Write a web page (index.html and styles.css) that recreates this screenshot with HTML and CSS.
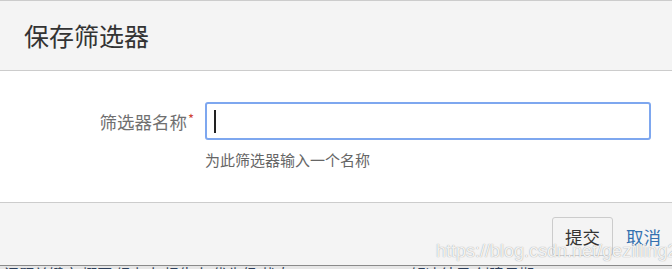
FILE: index.html
```html
<!DOCTYPE html>
<html lang="zh-CN">
<head>
    <meta charset="UTF-8">
    <meta name="viewport" content="width=device-width, initial-scale=1.0">
    <title>保存筛选器</title>
    <link rel="stylesheet" href="styles.css">
</head>
<body>
    <div class="dialog">
        <header class="dialog-header">
            <h2>保存筛选器</h2>
        </header>
        <div class="dialog-body">
            <div class="form-row">
                <label class="field-label" for="filter-name">筛选器名称<span class="required">*</span></label>
                <div class="field">
                    <div class="text-field" id="filter-name"><span class="caret"></span></div>
                    <div class="description">为此筛选器输入一个名称</div>
                </div>
            </div>
        </div>
        <footer class="dialog-footer">
            <button class="button" type="button">提交</button>
            <a class="cancel" href="#">取消</a>
            <span class="watermark">https://blog.csdn.net/gezilling211</span>
        </footer>
    </div>
    <div class="backdrop">
        <span>问题关键字 概要 经办人 报告人 优先级 状态</span>
        <span>解决结果 创建日期</span>
    </div>
</body>
</html>
```

FILE: styles.css
```css
body {
    margin: 0;
    padding: 0;
    font-family: "Noto Sans CJK SC", sans-serif;
    color: #333;
    background-color: #fff;
    overflow: hidden;
}
.dialog {
    border-top: 1px solid #ccc;
    position: relative;
}
.dialog-header {
    background-color: #f4f4f4;
    border-bottom: 1px solid #ccc;
    height: 69px;
    display: flex;
    align-items: center;
    padding: 0 24px;
}
.dialog-header h2 {
    margin: 0;
    font-size: 25px;
    font-weight: normal;
    color: #333;
    line-height: 1;
}
.dialog-body {
    height: 131px;
    padding: 31px 21px 0 0;
    box-sizing: border-box;
}
.form-row {
    display: grid;
    grid-template-columns: 194px 1fr;
    column-gap: 11px;
}
.field-label {
    height: 38px;
    display: flex;
    align-items: center;
    justify-content: flex-end;
    font-size: 17.5px;
    color: #707070;
}
.required {
    color: #d04437;
    font-size: 13px;
    align-self: flex-start;
    margin-top: 7px;
    margin-left: 1px;
}
.text-field {
    height: 38px;
    box-sizing: border-box;
    border: 2px solid #7ea7ef;
    border-radius: 3px;
    display: flex;
    align-items: center;
    padding-left: 7px;
}
.caret {
    width: 2px;
    height: 23px;
    background-color: #222;
}
.description {
    margin-top: 11px;
    font-size: 15px;
    line-height: 18px;
    color: #666;
}
.dialog-footer {
    background-color: #f4f4f4;
    border-top: 1px solid #ccc;
    height: 63px;
    display: flex;
    align-items: flex-start;
    justify-content: flex-end;
    gap: 13px;
    padding: 14px 11px 0 0;
    box-sizing: border-box;
    position: relative;
}
.button {
    width: 61px;
    height: 39px;
    background-color: #f4f4f4;
    border: 1px solid #ccc;
    border-radius: 3px;
    font-family: "Noto Sans CJK SC", sans-serif;
    font-size: 17.5px;
    color: #333;
    padding: 0;
    cursor: pointer;
}
.cancel {
    line-height: 39px;
    font-size: 17.5px;
    color: #3572b0;
    text-decoration: none;
}
.watermark {
    position: absolute;
    left: 436px;
    top: 38px;
    font-family: "Liberation Sans", Arial, sans-serif;
    font-size: 18px;
    color: rgba(255, 255, 255, 0.9);
    text-shadow: 0 0 1px rgba(90, 90, 90, 0.7);
    white-space: nowrap;
}
.backdrop {
    border-top: 1px solid #8a8a8a;
    background-color: #e6e6e6;
    height: 8px;
    overflow: hidden;
    display: flex;
    gap: 120px;
    padding-left: 4px;
}
.backdrop span {
    font-size: 15px;
    line-height: 15px;
    color: #2c3e5a;
    white-space: nowrap;
}
```
